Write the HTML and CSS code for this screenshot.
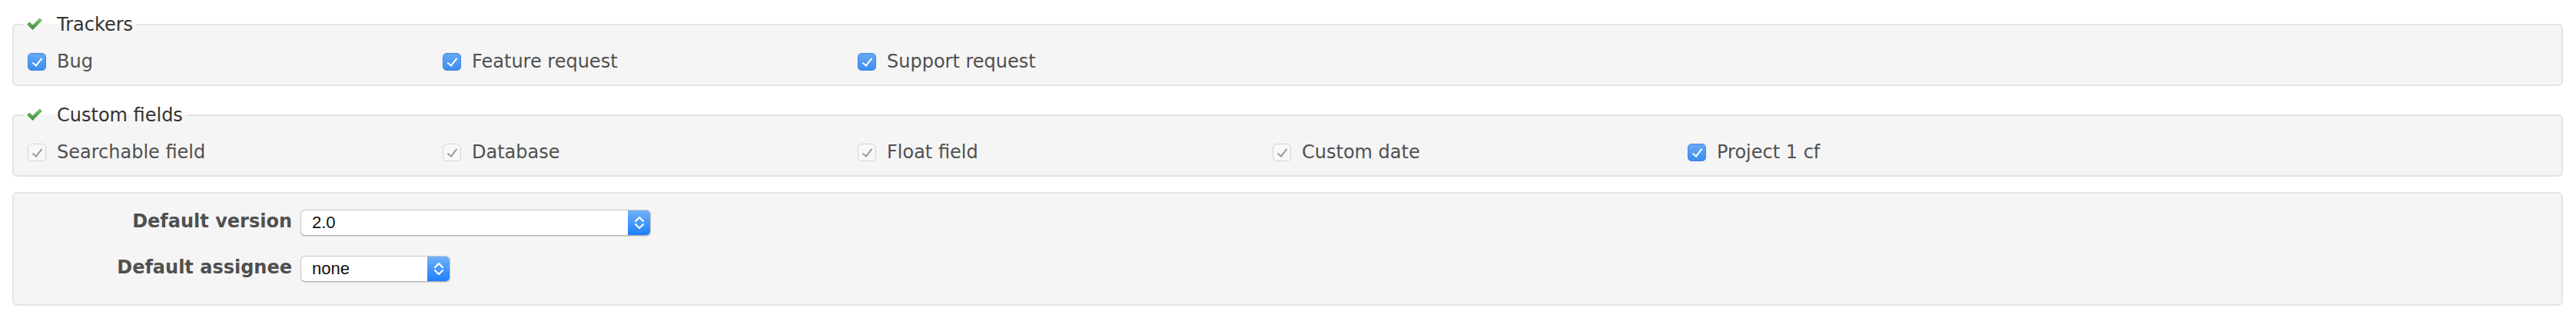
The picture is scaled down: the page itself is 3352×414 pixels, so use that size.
FILE: index.html
```html
<!DOCTYPE html>
<html>
<head>
<meta charset="utf-8">
<link rel="stylesheet" href="styles.css">
</head>
<body>
<div class="page">
  <fieldset class="box">
    <legend><span class="toggle"><svg viewBox="0 0 22 18" width="22" height="18"><defs><linearGradient id="g1" x1="0" y1="0" x2="0" y2="1"><stop offset="0" stop-color="#7cc36f"/><stop offset="1" stop-color="#3f8c3a"/></linearGradient></defs><path d="M1 9.5 L4.5 6.5 L8.5 10.5 L17.5 1.5 L21 4.5 L8.5 17 Z" fill="url(#g1)"/></svg></span>Trackers</legend>
    <div class="options">
      <label class="floating"><span class="cb on"></span>Bug</label>
      <label class="floating"><span class="cb on"></span>Feature request</label>
      <label class="floating"><span class="cb on"></span>Support request</label>
    </div>
  </fieldset>
  <fieldset class="box">
    <legend><span class="toggle"><svg viewBox="0 0 22 18" width="22" height="18"><defs><linearGradient id="g2" x1="0" y1="0" x2="0" y2="1"><stop offset="0" stop-color="#7cc36f"/><stop offset="1" stop-color="#3f8c3a"/></linearGradient></defs><path d="M1 9.5 L4.5 6.5 L8.5 10.5 L17.5 1.5 L21 4.5 L8.5 17 Z" fill="url(#g2)"/></svg></span>Custom fields</legend>
    <div class="options">
      <label class="floating"><span class="cb off"></span>Searchable field</label>
      <label class="floating"><span class="cb off"></span>Database</label>
      <label class="floating"><span class="cb off"></span>Float field</label>
      <label class="floating"><span class="cb off"></span>Custom date</label>
      <label class="floating"><span class="cb on"></span>Project 1 cf</label>
    </div>
  </fieldset>
  <div class="box tabular">
    <p class="row"><label class="lbl">Default version</label><span class="select wide"><span class="val">2.0</span><span class="stepper"><svg viewBox="0 0 14 20" width="14" height="20"><path d="M2 8 L7 3 L12 8 M2 12 L7 17 L12 12" fill="none" stroke="#fff" stroke-width="2.2" stroke-linecap="round" stroke-linejoin="round"/></svg></span></span></p>
    <p class="row"><label class="lbl">Default assignee</label><span class="select narrow"><span class="val">none</span><span class="stepper"><svg viewBox="0 0 14 20" width="14" height="20"><path d="M2 8 L7 3 L12 8 M2 12 L7 17 L12 12" fill="none" stroke="#fff" stroke-width="2.2" stroke-linecap="round" stroke-linejoin="round"/></svg></span></span></p>
  </div>
</div>
</body>
</html>
```
FILE: styles.css
```css
html, body {
  margin: 0;
  padding: 0;
  background: #fff;
}
body {
  font-family: "DejaVu Sans", Verdana, sans-serif;
  font-size: 24px;
  color: #505050;
}
.page {
  padding: 0 17px 0 16px;
}
.box {
  background: #f5f5f5;
  border: 2px solid #e4e4e4;
  border-radius: 6px;
  margin: 0 0 20px 0;
  padding: 12px;
  line-height: 36px;
}
fieldset.box {
  min-width: 0;
}
fieldset.box:first-child {
  margin-top: 14px;
}
legend {
  padding: 0 5px 0 4px;
  color: #333;
  line-height: 36px;
  display: flex;
  align-items: center;
}
.toggle {
  width: 40px;
  display: inline-flex;
  align-items: center;
}
.toggle svg {
  display: block;
  margin-top: -3px;
}
.options {
  display: flex;
}
.floating {
  width: 540px;
  display: flex;
  align-items: center;
  height: 36px;
}
.cb {
  width: 24px;
  height: 23px;
  box-sizing: border-box;
  border-radius: 5px;
  margin: 0 14px 0 6px;
  position: relative;
  flex: none;
}
.cb.on {
  background: linear-gradient(#68a8f4, #3d8ef0);
  border: 1px solid #3c86e6;
}
.cb.off {
  background: #f8f8f8;
  border: 1px solid #d4d4d4;
}
.cb::after {
  content: "";
  position: absolute;
  left: 8px;
  top: 3px;
  width: 5px;
  height: 11px;
  border-right: 2px solid #fff;
  border-bottom: 2px solid #fff;
  transform: rotate(38deg);
}
.cb.off::after {
  border-color: #999;
}
.tabular {
  padding: 12px;
}
.row {
  margin: 0;
  padding: 6px 0;
  min-height: 48px;
  display: flex;
  align-items: flex-start;
}
.lbl {
  width: 350px;
  text-align: right;
  font-weight: bold;
  color: #505050;
  margin-right: 11px;
  line-height: 36px;
}
.select {
  margin-top: 3px;
  height: 34px;
  box-sizing: border-box;
  background: #fff;
  border: 1px solid #c6c6c6;
  border-bottom-color: #b0b0b0;
  border-radius: 6px;
  box-shadow: 0 1px 1px rgba(0,0,0,0.12);
  display: flex;
  align-items: center;
  overflow: hidden;
  font-family: "Liberation Sans", Arial, sans-serif;
  font-size: 22px;
  color: #111;
}
.select.wide { width: 456px; }
.select.narrow { width: 195px; }
.val {
  flex: 1;
  padding-left: 14px;
  line-height: 32px;
}
.stepper {
  width: 29px;
  align-self: stretch;
  background: linear-gradient(#6fb1fb, #1f7ffb);
  display: flex;
  align-items: center;
  justify-content: center;
}
.stepper svg { display: block; }
```
